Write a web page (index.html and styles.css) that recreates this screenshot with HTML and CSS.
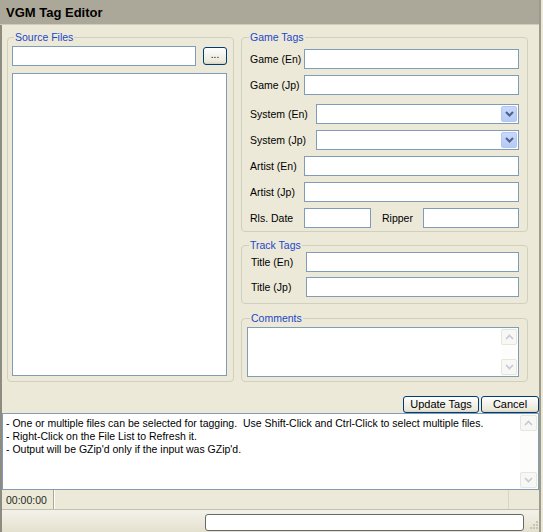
FILE: index.html
```html
<!DOCTYPE html>
<html>
<head>
<meta charset="utf-8">
<title>VGM Tag Editor</title>
<link rel="stylesheet" href="styles.css">
</head>
<body>
<div class="window">
  <div class="titlebar">VGM Tag Editor</div>
  <div class="frame">
    <div class="main">
      <fieldset class="group source">
        <legend>Source Files</legend>
        <div class="path-row">
          <div class="textbox path"></div>
          <div class="btn browse">...</div>
        </div>
        <div class="listbox"></div>
      </fieldset>
      <div class="right">
        <fieldset class="group game">
          <legend>Game Tags</legend>
          <div class="row"><span class="lbl w54">Game (En)</span><div class="textbox"></div></div>
          <div class="row before-combo"><span class="lbl w54">Game (Jp)</span><div class="textbox"></div></div>
          <div class="row"><span class="lbl w66">System (En)</span>
            <div class="textbox combo"><div class="drop"><svg width="9" height="6" viewBox="0 0 9 6"><path d="M1 1 L4.5 4.5 L8 1" fill="none" stroke="#4d6185" stroke-width="2"/></svg></div></div>
          </div>
          <div class="row"><span class="lbl w66">System (Jp)</span>
            <div class="textbox combo"><div class="drop"><svg width="9" height="6" viewBox="0 0 9 6"><path d="M1 1 L4.5 4.5 L8 1" fill="none" stroke="#4d6185" stroke-width="2"/></svg></div></div>
          </div>
          <div class="row"><span class="lbl w54">Artist (En)</span><div class="textbox"></div></div>
          <div class="row"><span class="lbl w54">Artist (Jp)</span><div class="textbox"></div></div>
          <div class="row last"><span class="lbl w54">Rls. Date</span><div class="textbox date"></div><span class="lbl ripper">Ripper</span><div class="textbox"></div></div>
        </fieldset>
        <fieldset class="group track">
          <legend>Track Tags</legend>
          <div class="row tight"><span class="lbl w55">Title (En)</span><div class="textbox"></div></div>
          <div class="row last"><span class="lbl w55">Title (Jp)</span><div class="textbox"></div></div>
        </fieldset>
        <fieldset class="group comments">
          <legend>Comments</legend>
          <div class="memo">
            <div class="memo-text"></div>
            <div class="vscroll">
              <div class="sbtn"><svg width="9" height="6" viewBox="0 0 9 6"><path d="M1 5 L4.5 1.5 L8 5" fill="none" stroke="#c3c9d6" stroke-width="1.6"/></svg></div>
              <div class="strack"></div>
              <div class="sbtn"><svg width="9" height="6" viewBox="0 0 9 6"><path d="M1 1 L4.5 4.5 L8 1" fill="none" stroke="#c3c9d6" stroke-width="1.6"/></svg></div>
            </div>
          </div>
        </fieldset>
      </div>
    </div>
    <div class="actions">
      <div class="btn update">Update Tags</div>
      <div class="btn cancel">Cancel</div>
    </div>
    <div class="log">
      <div class="log-text">
        <div>- One or multiple files can be selected for tagging.&nbsp; Use Shift-Click and Ctrl-Click to select multiple files.</div>
        <div>- Right-Click on the File List to Refresh it.</div>
        <div>- Output will be GZip'd only if the input was GZip'd.</div>
      </div>
      <div class="vscroll">
        <div class="sbtn"><svg width="9" height="6" viewBox="0 0 9 6"><path d="M1 5 L4.5 1.5 L8 5" fill="none" stroke="#c3c9d6" stroke-width="1.6"/></svg></div>
        <div class="strack"></div>
        <div class="sbtn"><svg width="9" height="6" viewBox="0 0 9 6"><path d="M1 1 L4.5 4.5 L8 1" fill="none" stroke="#c3c9d6" stroke-width="1.6"/></svg></div>
      </div>
    </div>
    <div class="status">
      <div class="panel time">00:00:00</div>
      <div class="panel fill"></div>
      <div class="panel end"></div>
    </div>
    <div class="bottom">
      <div class="progress"></div>
      <svg class="grip" width="10" height="10" viewBox="0 0 10 10">
        <rect x="7" y="1" width="2" height="2" fill="#c8c4b4"/>
        <rect x="4" y="4" width="2" height="2" fill="#c8c4b4"/>
        <rect x="7" y="4" width="2" height="2" fill="#c8c4b4"/>
        <rect x="1" y="7" width="2" height="2" fill="#c8c4b4"/>
        <rect x="4" y="7" width="2" height="2" fill="#c8c4b4"/>
        <rect x="7" y="7" width="2" height="2" fill="#c8c4b4"/>
      </svg>
    </div>
  </div>
</div>
</body>
</html>
```

FILE: styles.css
```css
* { box-sizing: border-box; }
html, body { margin: 0; padding: 0; }
body {
  width: 543px;
  height: 532px;
  overflow: hidden;
  background: #ece9d8;
  font-family: "Liberation Sans", Arial, sans-serif;
  font-size: 10.5px;
  color: #000;
}
.window {
  width: 541px;
  height: 532px;
  display: flex;
  flex-direction: column;
  border-right: 2px solid #9d9b8e;
}
.titlebar {
  height: 25px;
  flex: none;
  background: #aca899;
  border-bottom: 1px solid #cfccbd;
  font-weight: bold;
  font-size: 13px;
  line-height: 14px;
  padding: 6px 0 0 6px;
  color: #000;
}
.frame {
  flex: 1;
  display: flex;
  flex-direction: column;
  border-left: 2px solid #8e8c80;
}
.main {
  display: flex;
  gap: 7px;
  padding: 6px 0 0 5px;
  height: 357px;
  flex: none;
}
.group {
  margin: 0;
  border: 1px solid #d0d0bf;
  border-radius: 4px;
  min-width: 0;
}
.group legend {
  color: #1d47c9;
  line-height: 13px;
  padding: 0 1px;
}
.source {
  width: 227px;
  padding: 2px 6px 5px 4px;
  display: flex;
  flex-direction: column;
}
.source legend { margin-left: 2px; }
.path-row {
  display: flex;
  align-items: center;
  gap: 7px;
  height: 20px;
}
.textbox {
  flex: 1;
  height: 20px;
  background: #fff;
  border: 1px solid #7f9db9;
  min-width: 0;
}
.btn {
  height: 18px;
  border: 1px solid #003c74;
  border-radius: 3px;
  background: linear-gradient(#ffffff, #f4f3ee 40%, #ece9d8 85%, #d6d0c5);
  display: flex;
  align-items: center;
  justify-content: center;
  line-height: 1;
  font-size: 11px;
  color: #000;
}
.browse {
  width: 24px;
  flex: none;
  font-size: 10px;
  padding-bottom: 2px;
}
.listbox {
  flex: 1;
  margin-top: 7px;
  background: #fff;
  border: 1px solid #7f9db9;
}
.right {
  width: 287px;
  display: flex;
  flex-direction: column;
}
.game { padding: 5px 8px 3px 8px; }
.game legend { margin-left: -1px; }
.track { margin-top: 7px; padding: 0 8px 6px 9px; }
.track legend { margin-left: -2px; }
.comments { margin-top: 8px; padding: 2px 8px 4px 5px; }
.comments legend { margin-left: 3px; }
.row {
  display: flex;
  align-items: center;
  height: 20px;
  margin-bottom: 6px;
}
.row.before-combo { margin-bottom: 9px; }
.row.tight { margin-bottom: 5px; }
.row.last { margin-bottom: 0; }
.lbl { flex: none; white-space: nowrap; color: #000; }
.w54 { width: 54px; }
.w55 { width: 55px; }
.w66 { width: 66px; }
.date { flex: none; width: 67px; }
.ripper { margin: 0 10px 0 11px; }
.combo {
  display: flex;
  justify-content: flex-end;
  align-items: stretch;
  padding: 1px;
}
.drop {
  width: 16px;
  background: linear-gradient(#c9d8fc, #b6caf6);
  border: 1px solid #b6c6ef;
  border-radius: 2px;
  display: flex;
  align-items: center;
  justify-content: center;
}
.memo {
  height: 50px;
  background: #fff;
  border: 1px solid #7f9db9;
  display: flex;
}
.memo-text { flex: 1; }
.vscroll {
  width: 17px;
  display: flex;
  flex-direction: column;
  padding: 1px 1px 1px 0;
  background: #fcfcfa;
}
.sbtn {
  height: 16px;
  border: 1px solid #e6e6df;
  border-radius: 2px;
  background: #f7f7f3;
  display: flex;
  align-items: center;
  justify-content: center;
}
.strack { flex: 1; background: #fdfdfb; }
.actions {
  display: flex;
  justify-content: flex-end;
  gap: 2px;
  margin-top: 14px;
  height: 17px;
  flex: none;
}
.actions .btn { height: 17px; }
.update { width: 76px; }
.cancel { width: 58px; }
.log {
  height: 77px;
  flex: none;
  background: #fff;
  border: 1px solid #7f9db9;
  display: flex;
}
.log-text {
  flex: 1;
  padding: 3px 0 0 3px;
  line-height: 13px;
  white-space: nowrap;
  overflow: hidden;
}
.log .vscroll { width: 18px; }
.status {
  height: 20px;
  flex: none;
  display: flex;
  border-bottom: 1px solid #c2bfb0;
}
.panel {
  height: 100%;
  display: flex;
  align-items: center;
}
.time {
  width: 52px;
  padding-left: 4px;
  color: #1f2a1f;
  border-right: 1px solid #aca899;
  box-shadow: 1px 0 0 #fff;
}
.fill { flex: 1; border-right: 1px solid #d8d5c6; }
.end { width: 30px; }
.bottom {
  flex: 1;
  display: flex;
  align-items: center;
  padding-left: 203px;
  background: linear-gradient(#f3f2ea, #ebe8d9 60%, #e3e0d0);
}
.progress {
  width: 320px;
  height: 17px;
  background: #fff;
  border: 1px solid #686868;
  border-radius: 3px;
  margin-top: 2px;
}
.grip { margin-left: 5px; margin-top: 8px; }
```
